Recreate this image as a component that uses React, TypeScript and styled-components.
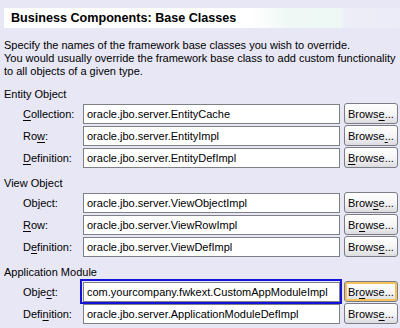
import { FC, ReactNode } from 'react'
import styled, { createGlobalStyle } from 'styled-components'

const GlobalStyle = createGlobalStyle`
  html, body {
    margin: 0;
    padding: 0;
    background: #e7e7f5;
  }
  body {
    font-family: 'Liberation Sans', Arial, sans-serif;
    font-size: 11px;
    color: #000;
  }
`

type Field = {
  label: string
  key: number
  value: string
  browseKey: number
  focused?: boolean
}

type Group = {
  title: string
  fields: Field[]
}

const groups: Group[] = [
  {
    title: 'Entity Object',
    fields: [
      { label: 'Collection:', key: 0, value: 'oracle.jbo.server.EntityCache', browseKey: 5 },
      { label: 'Row:', key: 2, value: 'oracle.jbo.server.EntityImpl', browseKey: 5 + 1 },
      { label: 'Definition:', key: 0, value: 'oracle.jbo.server.EntityDefImpl', browseKey: 0 },
    ],
  },
  {
    title: 'View Object',
    fields: [
      { label: 'Object:', key: 2, value: 'oracle.jbo.server.ViewObjectImpl', browseKey: 4 },
      { label: 'Row:', key: 0, value: 'oracle.jbo.server.ViewRowImpl', browseKey: 2 },
      { label: 'Definition:', key: 1, value: 'oracle.jbo.server.ViewDefImpl', browseKey: 5 },
    ],
  },
  {
    title: 'Application Module',
    fields: [
      {
        label: 'Object:',
        key: 4,
        value: 'com.yourcompany.fwkext.CustomAppModuleImpl',
        browseKey: 2,
        focused: true,
      },
      {
        label: 'Definition:',
        key: 4,
        value: 'oracle.jbo.server.ApplicationModuleDefImpl',
        browseKey: 5,
      },
    ],
  },
]

// 下線付きのニーモニック文字
const mnemonic = (text: string, index: number): ReactNode => (
  <>
    {text.slice(0, index)}
    <u>{text.charAt(index)}</u>
    {text.slice(index + 1)}
  </>
)

const App: FC = () => {
  return (
    <Page>
      <GlobalStyle />
      <TitleBar>Business Components: Base Classes</TitleBar>
      <Description>
        Specify the names of the framework base classes you wish to override.
        <br />
        You would usually override the framework base class to add custom functionality
        <br />
        to all objects of a given type.
      </Description>
      {groups.map((group) => (
        <Section key={group.title}>
          <SectionTitle>{group.title}</SectionTitle>
          {group.fields.map((field) => (
            <Row key={field.label + field.value}>
              <Label>{mnemonic(field.label, field.key)}</Label>
              <InputWrap $focused={field.focused}>
                <TextInput>{field.value}</TextInput>
              </InputWrap>
              <BrowseButton type="button" $hot={field.focused}>
                {mnemonic('Browse...', field.browseKey)}
              </BrowseButton>
            </Row>
          ))}
        </Section>
      ))}
    </Page>
  )
}

const Page = styled.div`
  width: 400px;
  height: 328px;
  padding: 8px 0 0 4px;
  box-sizing: border-box;
  overflow: hidden;
`

const TitleBar = styled.div`
  height: 20px;
  line-height: 21px;
  padding-left: 7px;
  font-size: 12.6px;
  font-weight: bold;
  font-family: 'Liberation Sans', Arial, sans-serif;
  background: linear-gradient(
    to right,
    #ffffff 0%,
    #ffffff 62%,
    #eff8f5 72%,
    #eef8f4 85%,
    #eeeef9 86%,
    #ececf8 100%
  );
`

const Description = styled.p`
  margin: 11px 0 0;
  line-height: 13px;
  white-space: nowrap;
`

const Section = styled.section`
  margin-top: 9px;
`

const SectionTitle = styled.div`
  line-height: 14px;
  margin-bottom: 2px;
`

const Row = styled.div`
  display: grid;
  grid-template-columns: 75px 257px 54px;
  column-gap: 4px;
  align-items: center;
  height: 20px;
  margin-bottom: 2px;
`

const Label = styled.span`
  padding-left: 19px;
  u {
    text-decoration-thickness: 1px;
    text-underline-offset: 2px;
  }
`

const InputWrap = styled.div<{ $focused?: boolean }>`
  position: relative;
  height: 20px;
  &::after {
    content: '';
    display: ${(p) => (p.$focused ? 'block' : 'none')};
    position: absolute;
    inset: -3px -2px -2px -3px;
    border: 2px solid #1414d8;
    pointer-events: none;
  }
`

const TextInput = styled.div`
  height: 20px;
  box-sizing: border-box;
  border: 1px solid #7f7f86;
  background: #ffffff;
  padding-left: 3px;
  line-height: 18px;
  white-space: nowrap;
  overflow: hidden;
`

const BrowseButton = styled.button<{ $hot?: boolean }>`
  height: 21px;
  padding: 0 0 0 3px;
  text-align: left;
  font: inherit;
  color: #000;
  border: 1px solid #7c7c84;
  border-radius: 3px;
  background: linear-gradient(to bottom, #ffffff 0%, #f4f4f6 55%, #dcdce0 100%);
  box-shadow: ${(p) => (p.$hot ? 'inset 0 0 0 2px #f5c15a' : 'none')};
  u {
    text-underline-offset: 2px;
  }
`

export default App
